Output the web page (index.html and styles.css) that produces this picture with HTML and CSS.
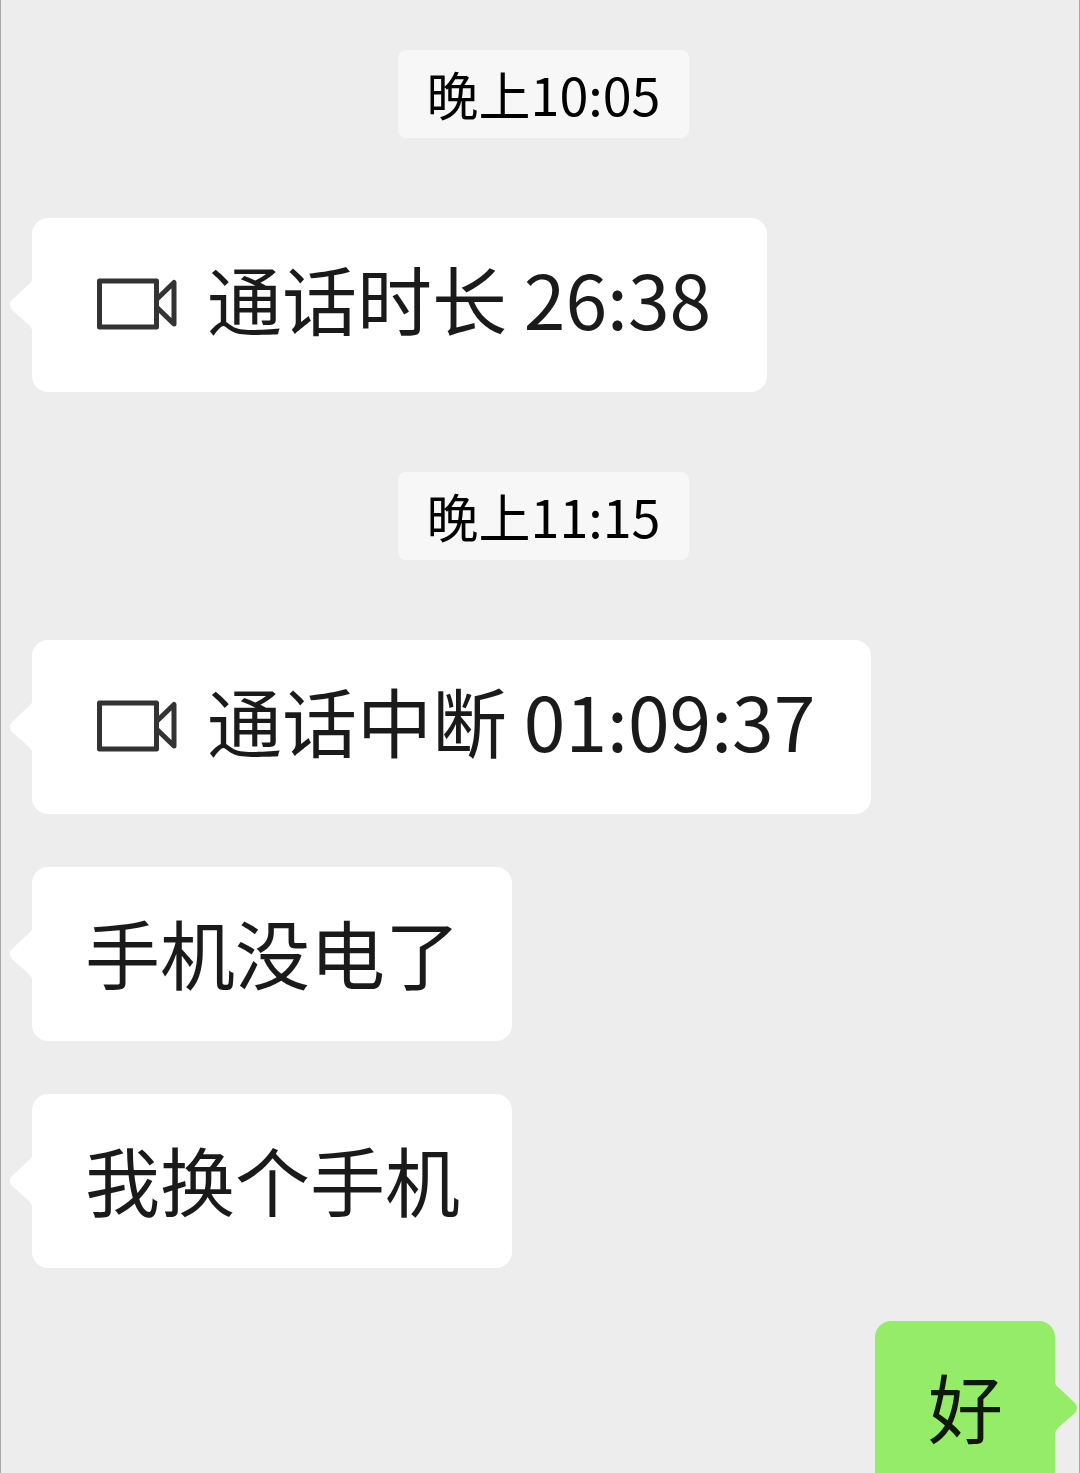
FILE: index.html
```html
<!DOCTYPE html>
<html lang="zh-CN">
<head>
<meta charset="utf-8">
<meta name="viewport" content="width=device-width, initial-scale=1">
<title>聊天</title>
<link rel="stylesheet" href="styles.css">
</head>
<body>
<svg width="0" height="0" class="sprites" aria-hidden="true">
  <symbol id="tail" viewBox="0 0 24 56">
    <path d="M24 0 C23 4 22 6 19 8 L3 23 Q-1 28 3 33 L19 47 C22 50 23 52 24 56 Z" fill="currentColor"/>
  </symbol>
  <symbol id="video" viewBox="0 0 80 52">
    <g fill="none" stroke="currentColor" stroke-width="5" stroke-linejoin="round">
      <rect x="2.5" y="3" width="57" height="46"/>
      <path d="M60 21 L77 4.500 V46 L60 29.500"/>
    </g>
  </symbol>
</svg>
<main class="chat">
  <time class="stamp" datetime="22:05">晚上10:05</time>
  <div class="message call">
    <svg class="tail" aria-hidden="true"><use href="#tail"/></svg>
    <svg class="video" aria-hidden="true"><use href="#video"/></svg>
    <span>通话时长 26:38</span>
  </div>
  <time class="stamp" datetime="23:15">晚上11:15</time>
  <div class="message call">
    <svg class="tail" aria-hidden="true"><use href="#tail"/></svg>
    <svg class="video" aria-hidden="true"><use href="#video"/></svg>
    <span>通话中断 01:09:37</span>
  </div>
  <div class="message">
    <svg class="tail" aria-hidden="true"><use href="#tail"/></svg>
    <span>手机没电了</span>
  </div>
  <div class="message">
    <svg class="tail" aria-hidden="true"><use href="#tail"/></svg>
    <span>我换个手机</span>
  </div>
  <div class="message sent">
    <svg class="tail" aria-hidden="true"><use href="#tail"/></svg>
    <span>好</span>
  </div>
</main>
</body>
</html>
```
FILE: styles.css
```css
* {
  box-sizing: border-box;
}

body {
  margin: 0;
  background: #ededed;
  font-family: "Noto Sans CJK SC", sans-serif;
  color: #1a1a1a;
}

.sprites {
  position: absolute;
}

.chat {
  display: flex;
  flex-direction: column;
  align-items: flex-start;
  height: 100vh;
  padding: 50px 24px 0 31px;
  border: solid #a8a8a8;
  border-width: 0 1px;
  overflow-x: hidden;
  overflow-y: auto;
  scrollbar-width: none;
}

.stamp {
  flex: none;
  align-self: center;
  padding: 8px 29px;
  border-radius: 8px;
  background: #f7f7f7;
  color: #000;
  font-size: 52px;
  line-height: 72px;
}

.stamp + .message,
.message + .stamp {
  margin-top: 80px;
}

.message {
  position: relative;
  flex: none;
  display: flex;
  align-items: center;
  padding: 35px 52px 39px 53px;
  border-radius: 16px;
  background: #fff;
  font-size: 75px;
  line-height: 100px;
}

.message + .message {
  margin-top: 53px;
}

.call {
  gap: 30px;
  padding: 30px 56px 44px 65px;
}

.tail {
  position: absolute;
  top: 59px;
  left: -23px;
  width: 24px;
  height: 56px;
  color: #fff;
}

.video {
  width: 80px;
  height: 52px;
  margin-top: 12px;
  color: #333;
}

.sent {
  align-self: flex-end;
  background: #95ec69;
  color: #0f180a;
}

.sent .tail {
  left: auto;
  right: -23px;
  color: #95ec69;
  transform: scaleX(-1);
}
```
